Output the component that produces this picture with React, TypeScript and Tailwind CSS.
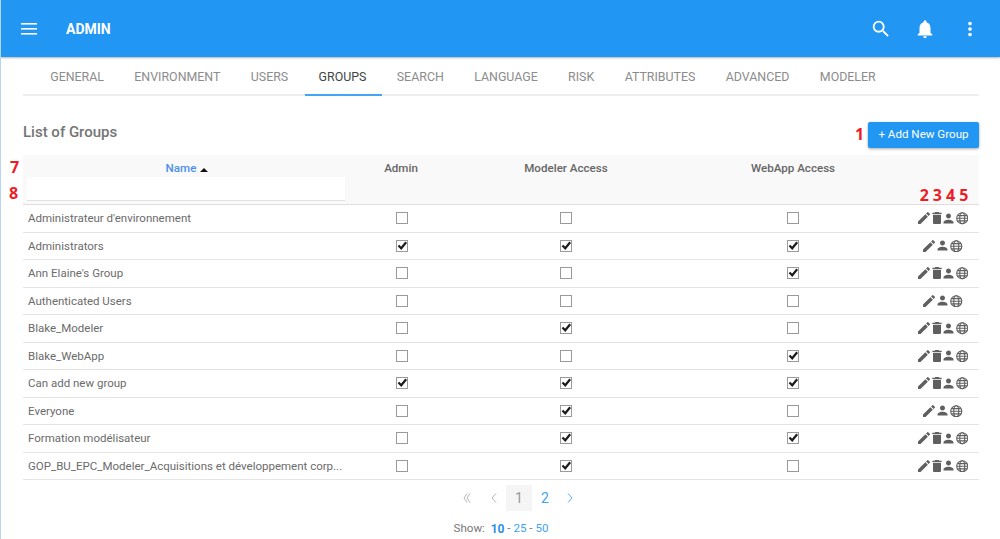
import React from "react";

const tabs = ["GENERAL", "ENVIRONMENT", "USERS", "GROUPS", "SEARCH", "LANGUAGE", "RISK", "ATTRIBUTES", "ADVANCED", "MODELER"];
const rows: [string, boolean, boolean, boolean, boolean][] = [
  ["Administrateur d'environnement", false, false, false, true],
  ["Administrators", true, true, true, false],
  ["Ann Elaine's Group", false, false, true, true],
  ["Authenticated Users", false, false, false, false],
  ["Blake_Modeler", false, true, false, true],
  ["Blake_WebApp", false, false, true, true],
  ["Can add new group", true, true, true, true],
  ["Everyone", false, true, false, false],
  ["Formation modélisateur", false, true, true, true],
  ["GOP_BU_EPC_Modeler_Acquisitions et développement corp...", false, true, false, true],
];
const grid = "grid grid-cols-[330px_98px_230px_224px_74px]";
const labelFont = { fontFamily: "'Open Sans', sans-serif" };

function Check({ on }: { on: boolean }) {
  return (
    <div className="relative w-[12px] h-[12px] border border-[#9a9a9a] bg-white">
      {on && (
        <svg viewBox="0 0 12 12" className="absolute left-0 top-[-1px] w-[11px] h-[11px]">
          <path d="M1.6 6 L4.6 9 L10 2.4" fill="none" stroke="#1c1c1c" strokeWidth="2.4" />
        </svg>
      )}
    </div>
  );
}

const EDIT = "M3 17.25V21h3.75L17.81 9.94l-3.75-3.75L3 17.25zM20.71 7.04a1 1 0 0 0 0-1.41l-2.34-2.34a1 1 0 0 0-1.41 0l-1.83 1.83 3.75 3.75 1.83-1.83z";
const TRASH = "M6 19c0 1.1.9 2 2 2h8c1.1 0 2-.9 2-2V7H6v12zM19 4h-3.5l-1-1h-5l-1 1H5v2h14V4z";
const PERSON = "M12 12c2.21 0 4-1.79 4-4s-1.79-4-4-4-4 1.79-4 4 1.79 4 4 4zm0 2c-2.67 0-8 1.34-8 4v2h16v-2c0-2.66-5.33-4-8-4z";

function Globe() {
  return (
    <svg viewBox="0 0 14 14" width={12.5} height={12.5} fill="none" stroke="#5f5f5f" strokeWidth="1.25" className="shrink-0">
      <circle cx="7" cy="7" r="6.2" />
      <ellipse cx="7" cy="7" rx="2.8" ry="6.2" />
      <path d="M1 7h12M1.8 4h10.4M1.8 10h10.4" />
    </svg>
  );
}

function Actions({ del }: { del: boolean }) {
  return (
    <div className="flex justify-center items-center">
      <svg viewBox="0 0 24 24" width={16} height={16} fill="#5f5f5f" className="shrink-0"><path d={EDIT} /></svg>
      {del && <svg viewBox="0 0 24 24" width={16} height={16} fill="#5f5f5f" className="shrink-0 ml-[-3px]"><path d={TRASH} /></svg>}
      <svg viewBox="0 0 24 24" width={15} height={15} fill="#5f5f5f" className={`shrink-0 ${del ? "ml-[-4px]" : "ml-[-2px]"}`}><path d={PERSON} /></svg>
      <Globe />
    </div>
  );
}

export default function App() {
  return (
    <div className="w-[1000px] h-[539px] overflow-hidden bg-white border-l border-[#b5d5f3] text-[#6b6b6b]" style={{ fontFamily: "Roboto, sans-serif" }}>
      <header className="h-[57px] bg-[#2196f3] flex items-center pt-[1px] pl-[20px] pr-[19px] text-white shadow-[0_1px_2px_rgba(0,0,0,0.3)] relative">
        <svg viewBox="0 0 16 12" className="w-[16px] h-[12px]" fill="white">
          <rect y="0" width="16" height="1.6" />
          <rect y="5" width="16" height="1.6" />
          <rect y="10" width="16" height="1.6" />
        </svg>
        <span className="ml-[29px] text-[14px] font-bold">ADMIN</span>
        <div className="ml-auto flex items-center">
          <svg viewBox="0 0 24 24" width={22} height={22} fill="white">
            <path d="M15.5 14h-.79l-.28-.27A6.47 6.47 0 0 0 16 9.5 6.5 6.5 0 1 0 9.5 16c1.61 0 3.09-.59 4.23-1.57l.27.28v.79l5 4.99L20.49 19l-4.99-5zm-6 0C7.01 14 5 11.99 5 9.5S7.01 5 9.5 5 14 7.01 14 9.5 11.99 14 9.5 14z" />
          </svg>
          <svg viewBox="0 0 24 24" width={22} height={22} fill="white" className="ml-[22px]">
            <path d="M12 22c1.1 0 2-.9 2-2h-4c0 1.1.9 2 2 2zm6-6v-5c0-3.07-1.63-5.64-4.5-6.32V4c0-.83-.67-1.5-1.5-1.5s-1.5.67-1.5 1.5v.68C7.64 5.36 6 7.92 6 11v5l-2 2v1h16v-1l-2-2z" />
          </svg>
          <svg viewBox="0 0 24 24" width={22} height={22} fill="white" className="ml-[23px]">
            <path d="M12 8c1.1 0 2-.9 2-2s-.9-2-2-2-2 .9-2 2 .9 2 2 2zm0 2c-1.1 0-2 .9-2 2s.9 2 2 2 2-.9 2-2-.9-2-2-2zm0 6c-1.1 0-2 .9-2 2s.9 2 2 2 2-.9 2-2-.9-2-2-2z" />
          </svg>
        </div>
      </header>

      <main className="pl-[22px] w-[978px]">
        <nav className="flex h-[39px] border-b-2 border-[#eeeeee] pl-[12px]">
          {tabs.map((t) => (
            <div
              key={t}
              className={`relative px-[15.2px] h-[39px] pt-[2px] flex items-center text-[12.4px] ${t === "GROUPS" ? "text-[#444] after:absolute after:left-[2px] after:right-0 after:bottom-0 after:h-[2px] after:bg-[#42a5f5]" : "text-[#8c8c8c]"}`}
            >
              {t}
            </div>
          ))}
        </nav>

        <div className="flex items-center justify-between mt-[25px] h-[27px]">
          <h2 className="text-[15px] font-medium text-[#757575] mt-[-5px]">List of Groups</h2>
          <div className="relative">
            <span className="absolute left-[-13px] top-[1px] text-[16px] font-bold text-[#ee1c25]" style={labelFont}>1</span>
            <button className="h-[26px] w-[111px] rounded-[2px] bg-[#2196f3] text-white text-[11.6px] shadow-[0_1px_3px_rgba(0,0,0,0.35)]">+ Add New Group</button>
          </div>
        </div>

        <div className={`${grid} relative mt-[7px] h-[50px] bg-[#f9f9f9] border-b border-[#dedede] text-[11.6px] font-medium text-[#666]`}>
          <span className="absolute left-[-13px] top-[0px] text-[16px] font-bold text-[#ee1c25]" style={labelFont}>7</span>
          <span className="absolute left-[-14px] top-[26px] text-[16px] font-bold text-[#ee1c25]" style={labelFont}>8</span>
          <div className="pl-[4px]">
            <div className="h-[22px] flex items-center justify-center pr-[6px] text-[#4a90f0]">
              <span className="mt-[5px] flex items-center">
                Name
                <span className="ml-[4px] mt-[3px] w-0 h-0 border-x-[4px] border-x-transparent border-b-[4px] border-b-[#111]" />
              </span>
            </div>
            <div className="w-[318px] h-[24px] bg-white border-b border-[#e2e2e2]" />
          </div>
          <div className="h-[27px] flex items-center justify-center pr-[2px]">Admin</div>
          <div className="h-[27px] flex items-center justify-center">Modeler Access</div>
          <div className="h-[27px] flex items-center justify-center">WebApp Access</div>
          <div className="flex justify-center items-end pl-[4px] gap-[4px] text-[16px] font-bold text-[#ee1c25] leading-[18px]" style={labelFont}>
            <span>2</span><span>3</span><span>4</span><span>5</span>
          </div>
        </div>

        {rows.map(([name, a, m, w, del]) => (
          <div key={name} className={`${grid} items-center h-[27.5px] border-b border-[#e4e4e4] text-[11.5px] text-[#6b6b6b]`}>
            <div className="pl-[5px] pr-[10px] whitespace-nowrap overflow-hidden pt-[1px]">{name}</div>
            <div className="flex justify-center"><Check on={a} /></div>
            <div className="flex justify-center"><Check on={m} /></div>
            <div className="flex justify-center"><Check on={w} /></div>
            <Actions del={del} />
          </div>
        ))}

        <div className="flex items-center h-[26px] mt-[5px] ml-[440px]">
          <svg viewBox="0 0 8 10" className="w-[8px] h-[10px]" fill="none" stroke="#aaa" strokeWidth="0.9">
            <path d="M4 0.5 L1 5 L4 9.5M7 0.5 L4 5 L7 9.5" />
          </svg>
          <svg viewBox="0 0 6 10" className="ml-[20px] w-[6px] h-[10px]" fill="none" stroke="#aaa" strokeWidth="0.9">
            <path d="M5 0.5 L1 5 L5 9.5" />
          </svg>
          <span className="ml-[9px] w-[26px] h-[26px] flex items-center justify-center bg-[#f5f5f5] text-[#999] text-[14px]">1</span>
          <span className="w-[26px] text-center text-[#42a5f5] text-[14px]">2</span>
          <svg viewBox="0 0 6 10" className="ml-[9px] w-[6px] h-[10px]" fill="none" stroke="#42a5f5" strokeWidth="0.9">
            <path d="M1 0.5 L5 5 L1 9.5" />
          </svg>
        </div>
        <div className="flex justify-center mt-[9px] text-[11.6px] text-[#777]">
          <span>Show:&nbsp;&nbsp;</span>
          <span className="font-bold text-[#2f8fe8] text-[12px]">10</span>
          <span>&nbsp;-&nbsp;</span>
          <span className="text-[#42a5f5]">25</span>
          <span>&nbsp;-&nbsp;</span>
          <span className="text-[#42a5f5]">50</span>
        </div>
      </main>
    </div>
  );
}
